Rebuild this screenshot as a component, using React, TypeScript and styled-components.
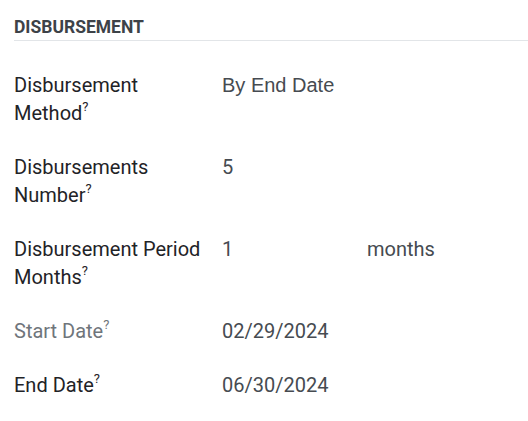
import React from "react";
import styled, { createGlobalStyle } from "styled-components";

const GlobalStyle = createGlobalStyle`
  body {
    margin: 0;
    background: #ffffff;
    font-family: Roboto, "Noto Sans", sans-serif;
  }
`;

const Section = styled.div`
  padding: 17px 0 0 14px;
`;

const Title = styled.div`
  font-size: 17.5px;
  font-weight: 700;
  color: #3d4248;
  text-transform: uppercase;
  line-height: 20px;
  padding-bottom: 3px;
  border-bottom: 1px solid #e2e5e8;
`;

const Grid = styled.div`
  display: grid;
  grid-template-columns: 208px 1fr;
  row-gap: 26px;
  padding-top: 30px;
`;

const Label = styled.div<{ $muted?: boolean }>`
  font-size: 20px;
  line-height: 28px;
  color: ${(p) => (p.$muted ? "#6f757b" : "#1f2327")};
  max-width: 196px;

  sup {
    font-size: 13px;
    line-height: 0;
    vertical-align: 9px;
  }
`;

const Value = styled.div<{ $sans?: boolean }>`
  font-size: 20px;
  line-height: 28px;
  color: #464b51;
  font-family: ${(p) => (p.$sans ? '"Liberation Sans", Arial, sans-serif' : 'Roboto, sans-serif')};
  display: flex;
`;

const Amount = styled.span`
  width: 145px;
`;

const fields = [
  { label: "Disbursement Method", value: "By End Date", sans: true },
  { label: "Disbursements Number", value: "5" },
  { label: "Disbursement Period Months", value: "1", unit: "months" },
  { label: "Start Date", value: "02/29/2024", muted: true },
  { label: "End Date", value: "06/30/2024" },
];

export default function App() {
  return (
    <>
      <GlobalStyle />
      <Section>
        <Title>Disbursement</Title>
        <Grid>
          {fields.map((f) => (
            <React.Fragment key={f.label}>
              <Label $muted={f.muted}>
                {f.label}
                <sup>?</sup>
              </Label>
              <Value $sans={f.sans}>
                {f.unit ? (
                  <>
                    <Amount>{f.value}</Amount>
                    <span>{f.unit}</span>
                  </>
                ) : (
                  f.value
                )}
              </Value>
            </React.Fragment>
          ))}
        </Grid>
      </Section>
    </>
  );
}
